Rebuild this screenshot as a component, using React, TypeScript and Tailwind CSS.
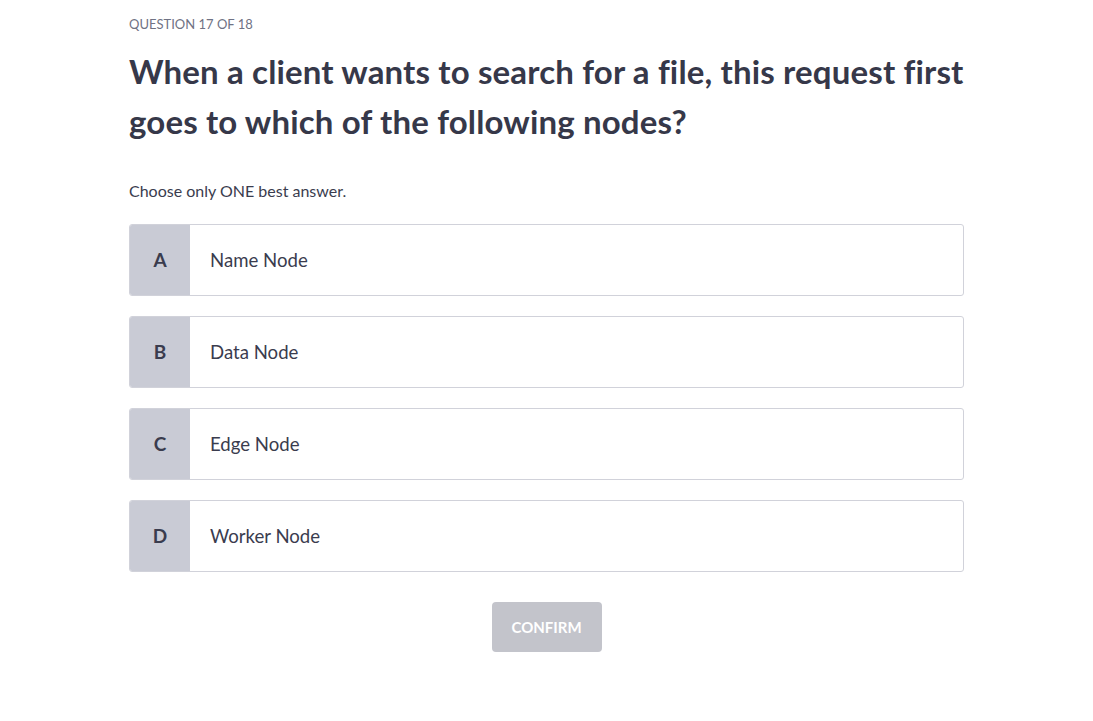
import React from "react";

const options = [
  { key: "A", label: "Name Node" },
  { key: "B", label: "Data Node" },
  { key: "C", label: "Edge Node" },
  { key: "D", label: "Worker Node" },
];

export default function App() {
  return (
    <div
      className="min-h-screen bg-white text-[#3a3c4e]"
      style={{ fontFamily: "Lato, 'Noto Sans', sans-serif" }}
    >
      <div className="mx-auto w-[835px] pt-[15px]">
        <div className="text-[13px] leading-[18px] uppercase text-[#6f7284]">
          Question 17 of 18
        </div>
        <h1 className="mt-[13px] -mr-[30px] text-[33px] leading-[50px] tracking-[0.15px] font-bold text-[#363849]">
          When a client wants to search for a file, this request first
          <br />
          goes to which of the following nodes?
        </h1>
        <p className="mt-[34px] text-[16px] leading-[22px] text-[#3a3c4e]">
          Choose only ONE best answer.
        </p>
        <div className="mt-[22px] flex flex-col gap-[20px]">
          {options.map((o) => (
            <div
              key={o.key}
              className="flex h-[72px] rounded-[3px] border border-[#d1d2da] overflow-hidden bg-white"
            >
              <div className="flex w-[60px] items-center justify-center pt-[1px] bg-[#c9cbd5] text-[19px] font-bold text-[#3a3c4e]">
                {o.key}
              </div>
              <div className="flex items-center pl-[20px] pt-[1px] text-[18.6px] text-[#3a3c4e]">
                {o.label}
              </div>
            </div>
          ))}
        </div>
        <div className="mt-[30px] flex justify-center">
          <button className="h-[50px] w-[110px] rounded-[4px] bg-[#c3c4cb] text-[15px] font-bold uppercase text-white">
            Confirm
          </button>
        </div>
      </div>
    </div>
  );
}
